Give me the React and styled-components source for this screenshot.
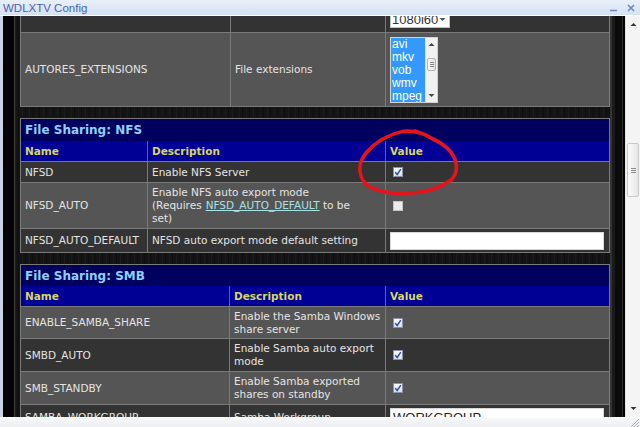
import React from "react";
import styled, { createGlobalStyle } from "styled-components";

const Global = createGlobalStyle`
  html, body { margin: 0; padding: 0; background: #000; }
  body { width: 640px; height: 427px; overflow: hidden; font-family: "DejaVu Sans", Verdana, sans-serif; }
  * { box-sizing: border-box; }
`;

const Window = styled.div`
  position: relative;
  width: 640px;
  height: 427px;
  display: flex;
  flex-direction: column;
  overflow: hidden;
`;

const TitleBar = styled.div`
  flex: none;
  height: 16px;
  border-bottom: 1px solid #fbfdff;
  background: linear-gradient(#e8eff9, #d5e1f3);
  display: flex;
  align-items: center;
  justify-content: space-between;
  padding: 0 5px 0 3px;
  font-family: "Liberation Sans", Arial, sans-serif;
  font-size: 11.5px;
  color: #4b61ad;
`;

const Controls = styled.div`
  display: flex;
  align-items: center;
  gap: 9px;
`;

const Body = styled.div`
  flex: 1;
  min-height: 0;
  display: flex;
  border-left: 3px solid #c9d4e6;
`;

const Gutter = styled.div`
  flex: none;
  width: 12px;
  background: #040404;
  border-right: 1px solid #3e3e3e;
`;

const Page = styled.div`
  flex: none;
  width: 595px;
  overflow: hidden;
  padding-left: 5px;
  background-color: #141414;
  background-image: repeating-linear-gradient(
    90deg,
    rgba(255, 255, 255, 0.03) 0 1px,
    transparent 1px 3px,
    rgba(0, 0, 0, 0.25) 3px 4px,
    transparent 4px 7px
  );
`;

const RightRail = styled.div`
  flex: none;
  width: 15px;
  background: linear-gradient(
    90deg,
    #333 0 2px,
    #1a1a1a 2px 5px,
    #0b0b0b 5px 12px,
    #2c2c2c 12px 13px,
    #020202 13px
  );
`;

const Scroller = styled.div`
  display: flex;
  flex-direction: column;
  gap: 11px;
  margin-top: -11px;
`;

const Panel = styled.div`
  flex: none;
  width: 590px;
  border: 1px solid #7a7a7a;
`;

const Cell = styled.div`
  display: flex;
  align-items: center;
  padding: 0 4px;
  font-size: 10.5px;
  line-height: 13px;
  color: #e4e4e4;
  white-space: nowrap;
  overflow: hidden;
`;

const tones = {
  dark: "#333333",
  light: "#555555",
  head: "#000094",
};

const Row = styled.div`
  display: grid;
  grid-template-columns: ${(p) => p.$cols};
  height: ${(p) => p.$h}px;
  background: ${(p) => tones[p.$tone]};
  & + & {
    border-top: 1px solid ${(p) => (p.$tone === "head" ? "#7878ae" : "#7a7a7a")};
  }
  & > ${Cell} + ${Cell} {
    border-left: 1px solid ${(p) => (p.$tone === "head" ? "#5a5ab8" : "#7a7a7a")};
  }
  & > ${Cell} {
    ${(p) => p.$tone === "head" && "font-weight: bold; color: #d6d66a;"}
  }
`;

const TitleRow = styled.div`
  height: ${(p) => p.$h}px;
  background: #00005e;
  display: flex;
  align-items: center;
  padding: 0 4px;
  font-size: 12px;
  font-weight: bold;
  color: #8fcfff;
`;

const Link = styled.span`
  color: #a4e2e8;
  text-decoration: underline;
  margin-left: 4px;
`;

const Box = styled.span`
  width: 10px;
  height: 10px;
  margin-left: 3px;
  display: inline-flex;
  align-items: center;
  justify-content: center;
  border: 1px solid ${(p) => (p.$checked ? "#8a92a8" : "#c4c4c4")};
  background: ${(p) => (p.$checked ? "linear-gradient(#f6f7fb, #dde1ec)" : "#ececec")};
`;

const Check = ({ checked }) => (
  <Box $checked={checked}>
    {checked && (
      <svg width="8" height="8" viewBox="0 0 8 8">
        <path d="M1.2 4.2 L3.2 6.5 L6.8 1.2" fill="none" stroke="#2c4c9e" strokeWidth="1.4" />
      </svg>
    )}
  </Box>
);

const TextBox = styled.input`
  width: 214px;
  height: 18px;
  border: 1px solid #d8d8d8;
  background: #fff;
  padding: 0 2px;
  font-family: "Liberation Sans", Arial, sans-serif;
  font-size: 13px;
  color: #222;
  outline: none;
`;

const Select = styled.div`
  width: 60px;
  height: 18px;
  border: 1px solid #c2c2c2;
  background: #fff;
  display: flex;
  align-items: center;
  justify-content: space-between;
  padding: 0 3px 0 1px;
  font-family: "Liberation Sans", Arial, sans-serif;
  font-size: 13px;
  color: #333;
`;

const ListBox = styled.div`
  width: 48px;
  height: 66px;
  border: 1px solid #d2d2d2;
  background: #fff;
  display: flex;
`;

const Options = styled.div`
  flex: 1;
  background: #3399ff;
  color: #fff;
  padding-left: 1px;
  font-family: "Liberation Sans", Arial, sans-serif;
  font-size: 12px;
  line-height: 13px;
  white-space: nowrap;
  overflow: hidden;
`;

const MiniBar = styled.div`
  flex: none;
  width: 12px;
  background: #f1f1f1;
  border-left: 1px solid #e0e0e0;
  display: flex;
  flex-direction: column;
  align-items: center;
  justify-content: space-between;
  padding: 4px 0;
`;

const MiniThumb = styled.div`
  width: 9px;
  height: 13px;
  margin-top: -10px;
  border: 1px solid #b5b5b5;
  background: linear-gradient(90deg, #fafafa, #e2e2e2);
  border-radius: 2px;
  display: flex;
  flex-direction: column;
  align-items: center;
  justify-content: center;
  gap: 1px;
  & > i {
    display: block;
    width: 4px;
    height: 1px;
    background: #888;
  }
`;

const Arrow = ({ up, color = "#444", size = 5 }) => (
  <svg width={size + 2} height={size} viewBox="0 0 7 5">
    <path d={up ? "M0.5 4 L3.5 1 L6.5 4 Z" : "M0.5 1 L3.5 4 L6.5 1 Z"} fill={color} />
  </svg>
);

const Scrollbar = styled.div`
  flex: none;
  width: 15px;
  background: #f4f4f4;
  border-left: 1px solid #e4e4e4;
  display: flex;
  flex-direction: column;
  align-items: center;
`;

const ScrollArrow = styled.div`
  flex: none;
  height: 17px;
  display: flex;
  align-items: center;
  justify-content: center;
`;

const Track = styled.div`
  flex: 1;
  width: 100%;
  padding-top: ${(p) => p.$offset}px;
  display: flex;
  justify-content: center;
`;

const Thumb = styled.div`
  width: 12px;
  height: 54px;
  border: 1px solid #c8c8c8;
  border-radius: 2px;
  background: linear-gradient(90deg, #fbfbfb, #e6e6e6);
  display: flex;
  flex-direction: column;
  align-items: center;
  justify-content: center;
  gap: 1px;
  & > i {
    display: block;
    width: 5px;
    height: 1px;
    background: #8c8c8c;
  }
`;

const StatusBar = styled.div`
  flex: none;
  height: 10px;
  background: linear-gradient(#f7f8fa, #eceef1);
  border-top: 1px solid #fdfdfd;
  display: flex;
  justify-content: flex-end;
  align-items: flex-end;
`;

const Overlay = styled.svg`
  position: absolute;
  left: 0;
  top: 0;
  pointer-events: none;
`;

const T1 = "209px 155px 1fr";
const NFS = "126px 238px 1fr";
const SMB = "208px 156px 1fr";

export default function App() {
  return (
    <Window>
      <Global />
      <TitleBar>
        <span>WDLXTV Config</span>
        <Controls>
          <svg width="8" height="8" viewBox="0 0 8 8">
            <path d="M0 6.5 H7" stroke="#6e85c6" strokeWidth="1.5" />
          </svg>
          <svg width="8" height="8" viewBox="0 0 8 8">
            <path d="M1 1 L7 7 M7 1 L1 7" stroke="#6e85c6" strokeWidth="1.6" />
          </svg>
        </Controls>
      </TitleBar>

      <Body>
        <Gutter />
        <Page>
          <Scroller>
            <Panel>
              <Row $cols={T1} $h={26} $tone="dark">
                <Cell />
                <Cell />
                <Cell>
                  <Select>
                    <span>1080i60</span>
                    <Arrow color="#555" />
                  </Select>
                </Cell>
              </Row>
              <Row $cols={T1} $h={74} $tone="light">
                <Cell>AUTORES_EXTENSIONS</Cell>
                <Cell>File extensions</Cell>
                <Cell>
                  <ListBox>
                    <Options>
                      {["avi", "mkv", "vob", "wmv", "mpeg"].map((x) => (
                        <div key={x}>{x}</div>
                      ))}
                    </Options>
                    <MiniBar>
                      <Arrow up />
                      <MiniThumb>
                        <i />
                        <i />
                        <i />
                      </MiniThumb>
                      <Arrow />
                    </MiniBar>
                  </ListBox>
                </Cell>
              </Row>
            </Panel>

            <Panel>
              <TitleRow $h={22}>File Sharing: NFS</TitleRow>
              <Row $cols={NFS} $h={20} $tone="head">
                <Cell>Name</Cell>
                <Cell>Description</Cell>
                <Cell>Value</Cell>
              </Row>
              <Row $cols={NFS} $h={21} $tone="dark">
                <Cell>NFSD</Cell>
                <Cell>Enable NFS Server</Cell>
                <Cell>
                  <Check checked />
                </Cell>
              </Row>
              <Row $cols={NFS} $h={46} $tone="light">
                <Cell>NFSD_AUTO</Cell>
                <Cell>
                  <div>
                    Enable NFS auto export mode
                    <br />
                    (Requires<Link>NFSD_AUTO_DEFAULT</Link> to be
                    <br />
                    set)
                  </div>
                </Cell>
                <Cell>
                  <Check />
                </Cell>
              </Row>
              <Row $cols={NFS} $h={24} $tone="dark">
                <Cell>NFSD_AUTO_DEFAULT</Cell>
                <Cell>NFSD auto export mode default setting</Cell>
                <Cell>
                  <TextBox readOnly defaultValue="" />
                </Cell>
              </Row>
            </Panel>

            <Panel>
              <TitleRow $h={21}>File Sharing: SMB</TitleRow>
              <Row $cols={SMB} $h={20} $tone="head">
                <Cell>Name</Cell>
                <Cell>Description</Cell>
                <Cell>Value</Cell>
              </Row>
              <Row $cols={SMB} $h={32} $tone="light">
                <Cell>ENABLE_SAMBA_SHARE</Cell>
                <Cell>
                  <div>
                    Enable the Samba Windows
                    <br />
                    share server
                  </div>
                </Cell>
                <Cell>
                  <Check checked />
                </Cell>
              </Row>
              <Row $cols={SMB} $h={33} $tone="dark">
                <Cell>SMBD_AUTO</Cell>
                <Cell>
                  <div>
                    Enable Samba auto export
                    <br />
                    mode
                  </div>
                </Cell>
                <Cell>
                  <Check checked />
                </Cell>
              </Row>
              <Row $cols={SMB} $h={33} $tone="light">
                <Cell>SMB_STANDBY</Cell>
                <Cell>
                  <div>
                    Enable Samba exported
                    <br />
                    shares on standby
                  </div>
                </Cell>
                <Cell>
                  <Check checked />
                </Cell>
              </Row>
              <Row $cols={SMB} $h={25} $tone="dark">
                <Cell>SAMBA_WORKGROUP</Cell>
                <Cell>Samba Workgroup</Cell>
                <Cell>
                  <TextBox readOnly defaultValue="WORKGROUP" />
                </Cell>
              </Row>
            </Panel>
          </Scroller>
        </Page>
        <RightRail />
        <Scrollbar>
          <ScrollArrow>
            <Arrow up color="#333" />
          </ScrollArrow>
          <Track $offset={110}>
            <Thumb>
              <i />
              <i />
              <i />
            </Thumb>
          </Track>
          <ScrollArrow>
            <Arrow color="#333" />
          </ScrollArrow>
        </Scrollbar>
      </Body>

      <StatusBar>
        <svg width="10" height="9" viewBox="0 0 10 9">
          <path d="M9 1 L1 9 M9 4 L4 9 M9 7 L7 9" stroke="#a8a8a8" strokeWidth="1" />
        </svg>
      </StatusBar>

      <Overlay width="640" height="427" viewBox="0 0 640 427">
        <path
          d="M420 133 C405 128 392 134 381 140 C370 147 361 157 360 166 C359 176 364 184 372 188 C384 193 400 194 412 193 C428 192 442 187 451 180 C458 173 457 164 454 157 C450 149 442 143 433 139 C428 136 422 133 415 131"
          fill="none"
          stroke="#e4141c"
          strokeWidth="3.6"
          strokeLinecap="round"
        />
      </Overlay>
    </Window>
  );
}
